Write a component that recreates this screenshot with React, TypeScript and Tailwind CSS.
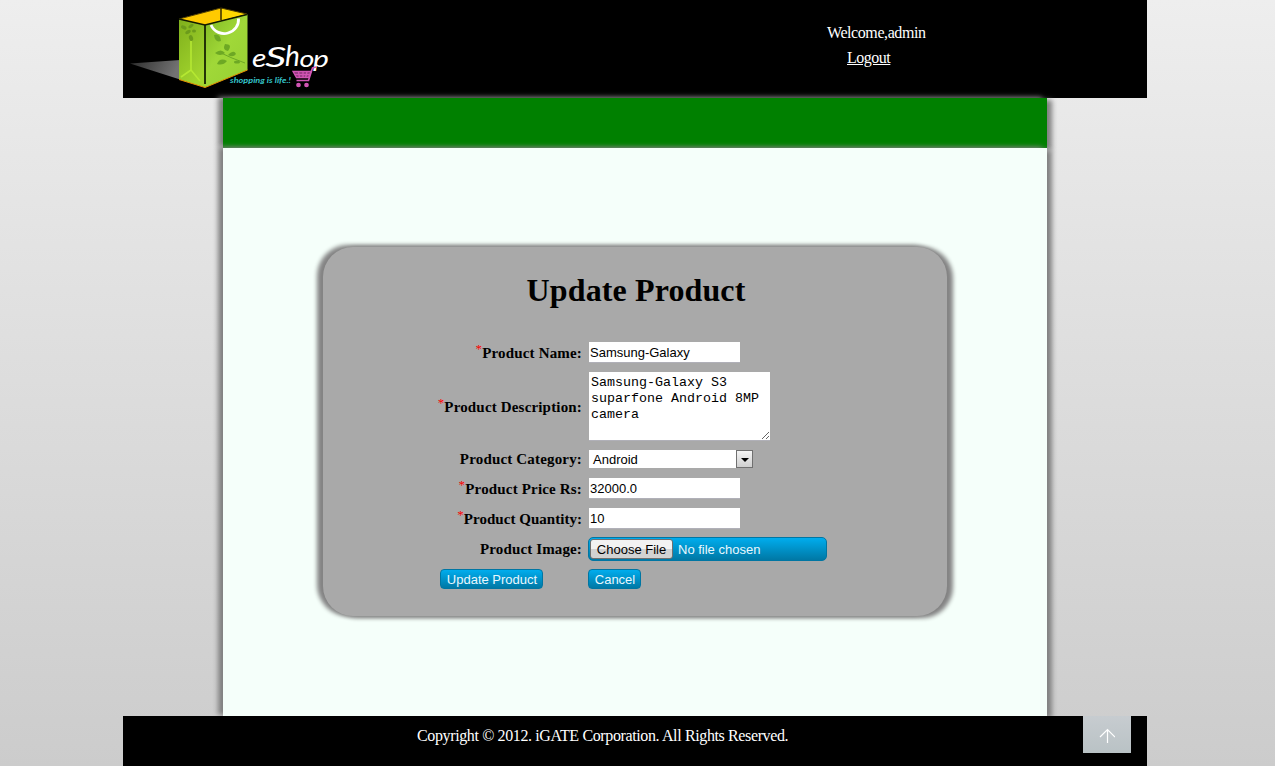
import type { ReactNode } from "react";

const panelShadow = "shadow-[-5px_-1px_4px_1px_#848484,5px_1px_4px_1px_#848484]";
const barShadow = "shadow-[-5px_-1px_5px_#808080,5px_2px_5px_#808080]";

function Logo() {
  return (
    <svg width="215" height="98" viewBox="0 0 215 98" aria-label="eShop">
      <defs>
        <linearGradient id="floor" x1="0" x2="1" y1="0" y2="0.2">
          <stop offset="0" stopColor="#2c2c2c" />
          <stop offset="1" stopColor="#737373" />
        </linearGradient>
        <linearGradient id="side" x1="0" x2="0.5" y1="0" y2="1">
          <stop offset="0" stopColor="#7faf1c" />
          <stop offset="1" stopColor="#a3d62e" />
        </linearGradient>
        <linearGradient id="front" x1="0" x2="0.8" y1="0" y2="1">
          <stop offset="0" stopColor="#80b722" />
          <stop offset="0.5" stopColor="#a0d838" />
          <stop offset="1" stopColor="#97d034" />
        </linearGradient>
      </defs>
      <path d="M7 63.5L57 60V79.5Z" fill="url(#floor)" />
      <path d="M56 19L98 8L124 14L82 25Z" fill="#ffd800" />
      <path d="M56 19L98 8V19L82 25Z" fill="#ffca00" />
      <path d="M56 19L98 8L124 14" fill="none" stroke="#4c3c00" strokeWidth="1" />
      <path d="M98 8V20" stroke="#171200" strokeWidth="1.3" />
      <path d="M56 19L82 25V87.5L56 79.5Z" fill="url(#side)" />
      <path d="M82 25L124.5 14.5V70L82 87.5Z" fill="url(#front)" />
      <path d="M56 79.5L82 87.5L124.5 70" fill="none" stroke="#e58d00" strokeWidth="1" />
      <path d="M56 19L82 25L124 14.5" fill="none" stroke="#121a00" strokeWidth="1.3" />
      <path d="M82 25V84" stroke="#101800" strokeWidth="1.7" />
      <path d="M68 41V70L58 77M68 70L77 81" fill="none" stroke="#b5e832" strokeWidth="1.6" />
      <g fill="#6c9b1b">
        <ellipse cx="61" cy="27.5" rx="3" ry="1.8" transform="rotate(25 61 27)" />
        <ellipse cx="68" cy="26" rx="3" ry="1.5" transform="rotate(-35 68 26)" />
        <ellipse cx="65" cy="32" rx="3" ry="1.8" transform="rotate(-30 65 32)" />
        <ellipse cx="68" cy="38" rx="2" ry="3" transform="rotate(-20 68 38)" />
        <ellipse cx="71" cy="31" rx="2" ry="1.5" />
      </g>
      <g fill="#6da824">
        <path d="M91 35Q97 33 98 41Q92 43 91 35Z" />
        <path d="M102 44Q110 44 105 51Q99 50 102 44Z" />
        <path d="M92 53Q98 48 102 53Q97 57 92 53Z" />
        <path d="M105 55Q111 49 113 54Q110 58 105 55Z" />
        <path d="M94 64Q97 57 104 61Q100 66 94 64Z" />
        <path d="M98 53Q108 58 122 63" fill="none" stroke="#6da824" strokeWidth="1" />
        <ellipse cx="114" cy="62" rx="3" ry="1.6" />
      </g>
      <path d="M88 25C91 32 99 35 105 33C112 31 116 25 115.500 18.500" fill="none" stroke="#fff" strokeWidth="2.8" />
      <g fontFamily="Lato, sans-serif" fontStyle="italic" fill="#fff">
        <text transform="translate(129 67) scale(1.2 1)" fontSize="25">e</text>
        <text transform="translate(142 66.500) scale(1.550 1)" fontSize="27">S</text>
        <text transform="translate(162 66)" fontSize="28">h</text>
        <text transform="translate(176.500 67) scale(1.15 0.9)" fontSize="25">o</text>
        <text transform="translate(190 66.500) scale(1.25 1)" fontSize="24">p</text>
      </g>
      <text x="107" y="82.500" textLength="61" lengthAdjust="spacingAndGlyphs" fontSize="7.500" fontFamily="Lato, sans-serif" fontStyle="italic" fontWeight="700" fill="#35c3ca">shopping is life.!</text>
      <g fill="none" stroke="#d255b4" strokeWidth="1.3">
        <path d="M193 67L189.500 68L185.500 80.500H173.500" strokeWidth="1.600" />
        <path d="M170 71.500H188L185.500 77.500H173.500Z" fill="#8a3478" />
        <path d="M171.500 74.500H186.500M175.500 71.500L176.500 78M180 71.500V78M184 71.500L182.500 78" />
        <circle cx="175.500" cy="85" r="1.700" fill="#d255b4" />
        <circle cx="183.500" cy="85" r="1.700" fill="#d255b4" />
      </g>
    </svg>
  );
}

interface RowProps {
  label: string;
  required?: boolean;
  height: string;
  labelStyle?: string;
  children: ReactNode;
}

function Row({ label, required, height, labelStyle = "pt-px tracking-[0.17px]", children }: RowProps) {
  return (
    <div className={`grid grid-cols-[259px_1fr] items-center gap-[6px] ${height}`}>
      <label className={`flex items-center justify-end text-[15px] leading-[18px] font-bold whitespace-nowrap ${labelStyle}`}>
        {required && <span className="-mt-2 text-[13px] leading-4 font-normal text-[#f00]">*</span>}
        {label}
      </label>
      <div className="flex items-center">{children}</div>
    </div>
  );
}

const field = "ml-px h-[21px] w-[151px] border-b border-[#b0b0b8] bg-white pt-px pl-px font-['Liberation_Sans',sans-serif] text-[13px] outline-none";
const button =
  "h-5 rounded-[4px] border border-[#0076a3] bg-linear-to-b from-[#00adee] to-[#0078a5] pt-px pl-px font-['Liberation_Sans',sans-serif] text-[13px] leading-[18px] text-[#e8f8fe] whitespace-nowrap";

export default function App() {
  return (
    <div className="h-[767px] overflow-hidden bg-white font-['Liberation_Serif',serif] text-black">
      <div className="h-[766px] bg-linear-to-b from-[#eeeeee] to-[#cccccc]">
        <div className="ml-[123px] flex h-[766px] w-[1024px] flex-col">
          <header className="flex h-[98px] shrink-0 bg-black text-white">
            <Logo />
            <div className="ml-[489px] flex flex-col pt-5 text-[16px] leading-[25px]">
              <span className="tracking-[-0.42px]">Welcome,admin</span>
              <a href="#" className="ml-5 self-start tracking-[-0.48px] underline">Logout</a>
            </div>
          </header>
          <nav className={`mx-[100px] h-[50px] shrink-0 bg-[#008000] ${barShadow}`} />
          <main className={`mx-[100px] h-[568px] shrink-0 bg-[#f5fffa] px-[100px] pt-[99px] ${barShadow}`}>
            <form className={`h-[369px] w-[624px] rounded-[30px] bg-[#a9a9a9] ${panelShadow}`} onSubmit={(e) => e.preventDefault()}>
              <h1 className="h-[90px] pt-[25px] pl-[2px] text-center text-[32px] leading-[37px] font-bold tracking-[0.12px]">Update Product</h1>
              <Row label="Product Name:" required height="h-[30px]">
                <input className={field} defaultValue="Samsung-Galaxy" />
              </Row>
              <Row label="Product Description:" required height="h-[78px]">
                <textarea
                  className="ml-px block h-[69px] w-[181px] resize border-b border-[#b0b0b8] bg-white px-[2px] pt-[3px] font-['Liberation_Mono',monospace] text-[13.33px] leading-4 outline-none"
                  defaultValue={"Samsung-Galaxy S3\nsuparfone Android 8MP\ncamera"}
                />
              </Row>
              <Row label="Product Category:" height="h-[28px]" labelStyle="tracking-[0.17px]">
                <div className="ml-px flex h-[18px] w-[164px] items-center justify-between bg-white pl-[4px] font-['Liberation_Sans',sans-serif] text-[13px]">
                  <span className="pt-px">Android</span>
                  <span className="flex h-[18px] w-[17px] items-center justify-center border border-[#707070] bg-linear-to-b from-[#f4f4f4] to-[#cfcfcf]">
                    <svg className="mt-px" width="8" height="4" viewBox="0 0 8 4"><path d="M0 0H8L4 4Z" /></svg>
                  </span>
                </div>
              </Row>
              <Row label="Product Price Rs:" required height="h-[30px]">
                <input className={field} defaultValue="32000.0" />
              </Row>
              <Row label="Product Quantity:" required height="h-[30px]" labelStyle="pt-px tracking-[0.03px]">
                <input className={field} defaultValue="10" />
              </Row>
              <Row label="Product Image:" height="h-[32px]" labelStyle="tracking-[0.13px]">
                <div className="flex h-6 w-[239px] items-center rounded-[5px] border border-[#0076a3] bg-linear-to-b from-[#00adee] to-[#0078a5] pl-px font-['Liberation_Sans',sans-serif] text-[13px] text-[#e8f8fe]">
                  <button type="button" className="h-5 w-[83px] rounded-[3px] border border-[#707070] bg-linear-to-b from-[#f2f2f2] from-50% to-[#d2d2d2] to-50% pt-px leading-[18px] whitespace-nowrap text-black">
                    Choose File
                  </button>
                  <span className="ml-[5px] pt-px">No file chosen</span>
                </div>
              </Row>
              <div className="flex h-[28px] items-center pl-[117px]">
                <button type="submit" className={`w-[103px] ${button}`}>Update Product</button>
                <button type="button" className={`ml-[45px] w-[53px] ${button}`}>Cancel</button>
              </div>
            </form>
          </main>
          <footer className="flex h-[50px] shrink-0 justify-between bg-black pr-4 pl-[294px] text-white">
            <p className="pt-[10px] text-[16px] leading-5 tracking-[-0.375px]">Copyright © 2012. iGATE Corporation. All Rights Reserved.</p>
            <a href="#" className="flex h-[37px] w-12 items-center justify-center bg-linear-to-b from-[#c7ccd0] to-[#b9c2c5]">
              <svg className="mt-[3px]" width="16" height="16" viewBox="0 0 16 16" fill="none" stroke="#fff" strokeWidth="1.2"><path d="M8.500 15V2M1 9L8.500 1.500L16 9" /></svg>
            </a>
          </footer>
        </div>
      </div>
    </div>
  );
}
